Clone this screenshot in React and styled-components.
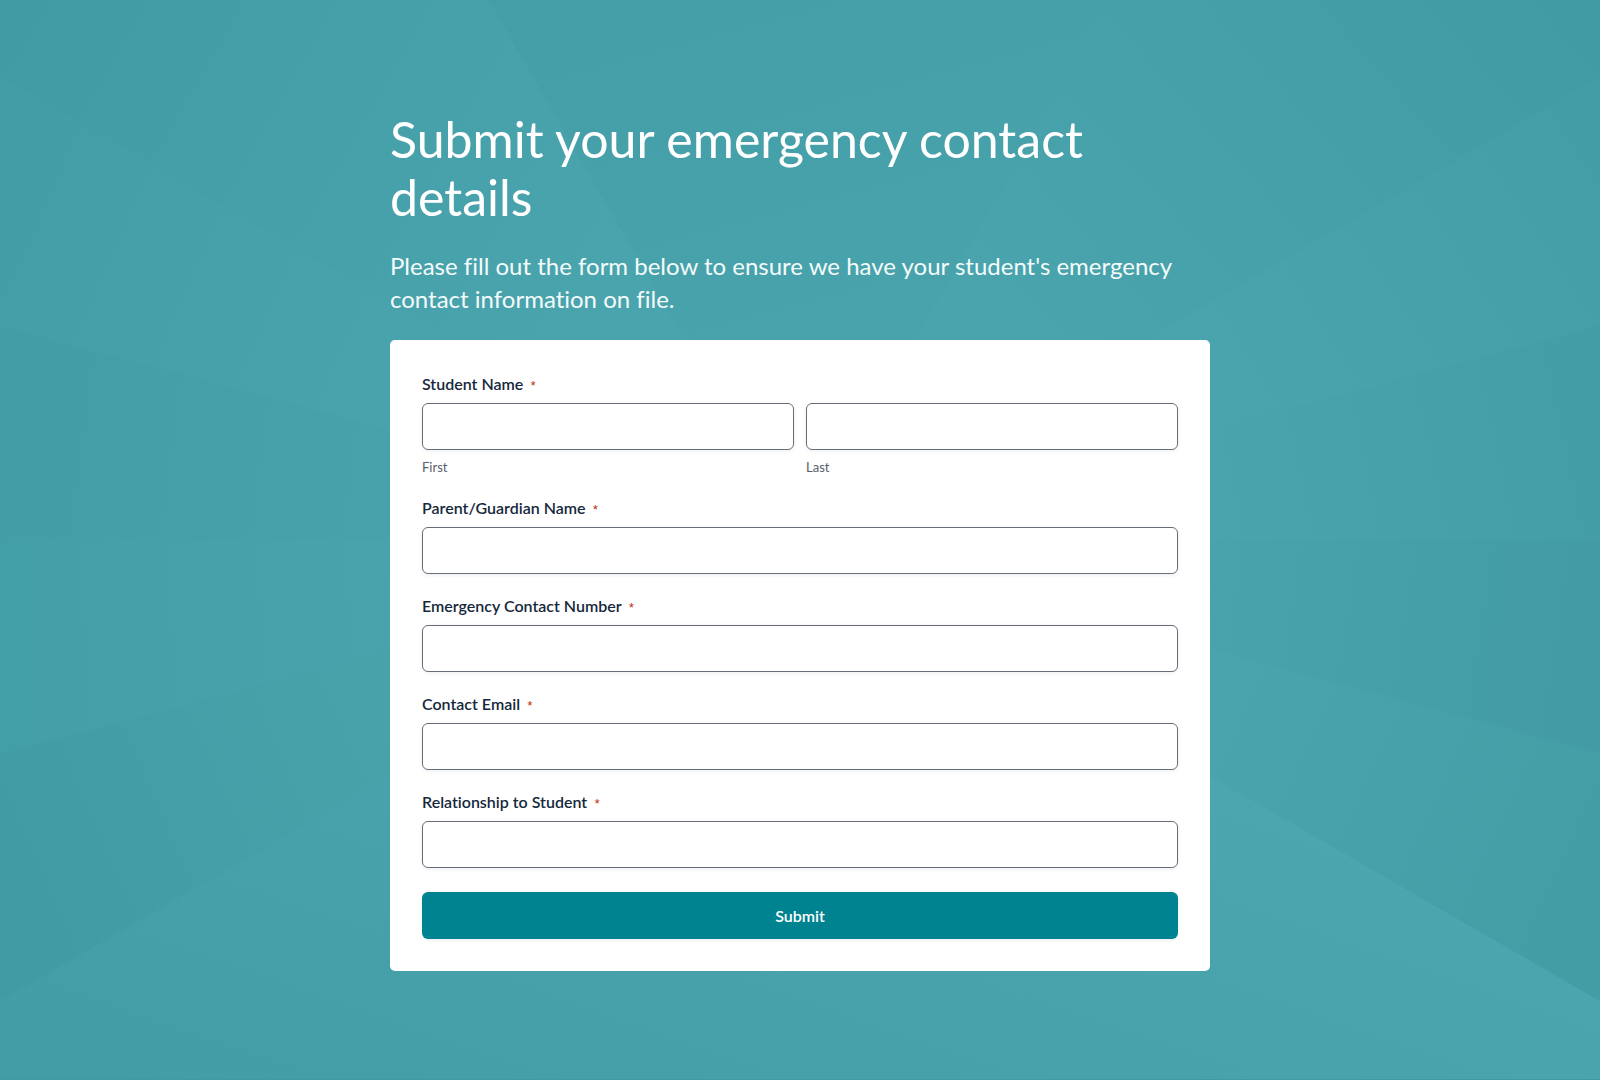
import styled, { createGlobalStyle } from 'styled-components'

const GlobalStyle = createGlobalStyle`
  *, *::before, *::after {
    box-sizing: border-box;
  }
  body {
    margin: 0;
    font-family: Lato, 'Open Sans', sans-serif;
    font-variant-ligatures: none;
    background: #47a2ab;
  }
`

const Page = styled.main`
  position: relative;
  isolation: isolate;
  display: flex;
  justify-content: center;
  min-height: 100vh;
  padding: 110px 24px 108px;
  border-bottom: 1px solid #4398a1;
`

const Backdrop = styled.svg`
  position: absolute;
  inset: 0;
  z-index: -1;
  width: 100%;
  height: 100%;
`

const Content = styled.div`
  width: 100%;
  max-width: 820px;
`

const Title = styled.h1`
  margin: 0 0 23px;
  color: #fff;
  font-size: 50px;
  font-weight: 400;
  line-height: 58px;
`

const Intro = styled.p`
  margin: 0 0 25px;
  color: #f4fbfb;
  font-size: 24px;
  line-height: 33px;
`

const Card = styled.form`
  display: flex;
  flex-direction: column;
  gap: 20px;
  padding: 32px;
  border-radius: 5px;
  background: #fff;
`

const Field = styled.div`
  display: flex;
  flex-direction: column;
  gap: 8px;
  min-width: 0;
`

const Label = styled.label`
  color: #15283c;
  font-size: 16px;
  font-weight: 600;
  line-height: 23px;
`

const Required = styled.span`
  margin-left: 6px;
  color: #c02b0a;
  font-family: 'Liberation Mono', monospace;
  font-size: 13px;
  font-weight: 400;
  line-height: 1;
`

const NameRow = styled.div`
  display: grid;
  grid-template-columns: 1fr 1fr;
  gap: 12px;
`

const SubLabel = styled.label`
  color: #585e6a;
  font-size: 13px;
  line-height: 18px;
`

const Input = styled.input`
  width: 100%;
  height: 47px;
  padding: 0 12px;
  border: 1px solid #686e77;
  border-radius: 6px;
  outline: 0;
  background: #fff;
  box-shadow: 0 1px 4px rgba(18, 25, 97, 0.08);
  color: #15283c;
  font-family: inherit;
  font-size: 15px;

  &:focus {
    border-color: #008391;
  }
`

const SubmitButton = styled.button`
  height: 47px;
  margin-top: 4px;
  border: 0;
  border-radius: 6px;
  background: #008391;
  box-shadow: 0 1px 4px rgba(18, 25, 97, 0.08);
  color: #fff;
  font-family: inherit;
  font-size: 16px;
  font-weight: 600;
  cursor: pointer;
`

const fields = [
  { name: 'guardian', label: 'Parent/Guardian Name', type: 'text' },
  { name: 'phone', label: 'Emergency Contact Number', type: 'tel' },
  { name: 'email', label: 'Contact Email', type: 'email' },
  { name: 'relationship', label: 'Relationship to Student', type: 'text' },
]

// wedges around the centre, angles in degrees clockwise from the right;
// each fades along `dir` from `near` to `far`
const CX = 800
const CY = 540
const wedges = [
  { from: 0, to: 15, dir: [0.99, 0.15], near: [410, '#48a3ac'], far: [815, '#429ba5'] },
  { from: 15, to: 30, dir: [0.91, 0.42], near: [449, '#49a4ad'], far: [880, '#429da5'] },
  { from: 30, to: 150, dir: [-0.33, 0.94], near: [109, '#4ba6b0'], far: [734, '#429da6'] },
  { from: 150, to: 165, dir: [-0.91, 0.4], near: [457, '#47a2aa'], far: [872, '#419ba4'] },
  { from: 165, to: 180, dir: [-1, 0.03], near: [410, '#49a3ac'], far: [800, '#429ea7'] },
  { from: 180, to: 195, dir: [-0.99, -0.13], near: [400, '#48a2ab'], far: [800, '#429da6'] },
  { from: 195, to: 210, dir: [-0.92, -0.4], near: [453, '#49a3ac'], far: [892, '#429da6'] },
  { from: 210, to: 240, dir: [-0.87, -0.5], near: [300, '#4aa4ad'], far: [966, '#419ba5'] },
  { from: 240, to: 300, dir: [-0.26, -0.96], near: [180, '#49a3ac'], far: [599, '#449ea7'] },
  { from: 300, to: 330, dir: [0.75, -0.66], near: [300, '#49a4ad'], far: [956, '#419ba4'] },
  { from: 330, to: 345, dir: [0.84, -0.55], near: [443, '#49a4ad'], far: [922, '#439da6'] },
  { from: 345, to: 360, dir: [0.98, -0.2], near: [410, '#49a4ad'], far: [822, '#439da6'] },
]

const ray = (deg) => {
  const rad = (deg * Math.PI) / 180
  return `${CX + 3000 * Math.cos(rad)},${CY + 3000 * Math.sin(rad)}`
}

const Facets = () => (
  <Backdrop viewBox="0 0 1600 1080" preserveAspectRatio="xMidYMid slice" aria-hidden="true">
    <defs>
      {wedges.map(({ from, dir, near, far }) => (
        <linearGradient
          key={from}
          id={`wedge-${from}`}
          gradientUnits="userSpaceOnUse"
          x1={CX + dir[0] * near[0]}
          y1={CY + dir[1] * near[0]}
          x2={CX + dir[0] * far[0]}
          y2={CY + dir[1] * far[0]}
        >
          <stop offset="0" stopColor={near[1]} />
          <stop offset="1" stopColor={far[1]} />
        </linearGradient>
      ))}
    </defs>
    {wedges.map(({ from, to }) => (
      <polygon
        key={from}
        points={`${CX},${CY} ${ray(from)} ${ray((from + to) / 2)} ${ray(to)}`}
        fill={`url(#wedge-${from})`}
      />
    ))}
  </Backdrop>
)

const TextField = ({ name, label, type }) => (
  <Field>
    <Label htmlFor={name}>
      {label}
      <Required aria-hidden="true">*</Required>
    </Label>
    <Input id={name} name={name} type={type} required />
  </Field>
)

const App = () => (
  <>
    <GlobalStyle />
    <Page>
      <Facets />
      <Content>
        <Title>Submit your emergency contact details</Title>
        <Intro>
          Please fill out the form below to ensure we have your student's emergency contact
          information on file.
        </Intro>
        <Card onSubmit={(e) => e.preventDefault()}>
          <Field role="group" aria-labelledby="student-name">
            <Label as="span" id="student-name">
              Student Name
              <Required aria-hidden="true">*</Required>
            </Label>
            <NameRow>
              <Field>
                <Input id="first" name="first" type="text" required />
                <SubLabel htmlFor="first">First</SubLabel>
              </Field>
              <Field>
                <Input id="last" name="last" type="text" required />
                <SubLabel htmlFor="last">Last</SubLabel>
              </Field>
            </NameRow>
          </Field>
          {fields.map((field) => (
            <TextField key={field.name} {...field} />
          ))}
          <SubmitButton type="submit">Submit</SubmitButton>
        </Card>
      </Content>
    </Page>
  </>
)

export default App
